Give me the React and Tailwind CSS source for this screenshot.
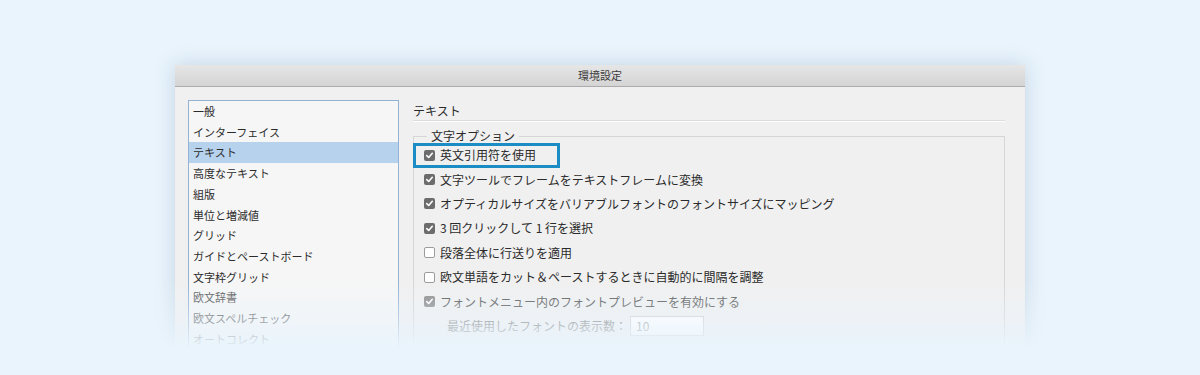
const listItems = [
  '一般',
  'インターフェイス',
  'テキスト',
  '高度なテキスト',
  '組版',
  '単位と増減値',
  'グリッド',
  'ガイドとペーストボード',
  '文字枠グリッド',
  '欧文辞書',
  '欧文スペルチェック',
  'オートコレクト',
]

const options = [
  { label: '英文引用符を使用', checked: true, highlight: true },
  { label: '文字ツールでフレームをテキストフレームに変換', checked: true },
  { label: 'オプティカルサイズをバリアブルフォントのフォントサイズにマッピング', checked: true },
  { label: '3 回クリックして 1 行を選択', checked: true },
  { label: '段落全体に行送りを適用', checked: false },
  { label: '欧文単語をカット＆ペーストするときに自動的に間隔を調整', checked: false },
  { label: 'フォントメニュー内のフォントプレビューを有効にする', checked: true, dim: true },
]

function Checkbox({ checked, dim }) {
  if (!checked) {
    return <span className="w-[11px] h-[11px] shrink-0 rounded-[2px] border border-[#9c9c9c] bg-white" />
  }
  return (
    <span className={`w-[11px] h-[11px] shrink-0 rounded-[2px] flex items-center justify-center ${dim ? 'bg-[#8a8a8a]' : 'bg-[#6c6c6c]'}`}>
      <svg width="9" height="9" viewBox="0 0 9 9">
        <path d="M1.8 4.6l1.9 1.9 3.6-4.2" fill="none" stroke="#fff" strokeWidth="1.6" strokeLinecap="round" strokeLinejoin="round" />
      </svg>
    </span>
  )
}

export default function App() {
  return (
    <div
      className="relative w-[1200px] h-[375px] overflow-hidden bg-[#e9f4fc] text-[#2b2b2b]"
      style={{ fontFamily: '"Noto Sans CJK JP", "Noto Sans", sans-serif' }}
    >
      <div className="pt-[65px] flex justify-center">
        <div className="w-[850px] h-[340px] bg-[#f0f0f0] shadow-[0_0_18px_rgba(110,140,170,0.3)]">
          {/* title bar */}
          <div className="h-[22px] border-b border-[#acacac] bg-gradient-to-b from-[#e6e6e6] to-[#d4d4d4] flex items-center justify-center text-[11px] text-[#3c3c3c]">
            環境設定
          </div>

          <div className="flex pl-[13px] pr-[20px] pt-[14px]">
            {/* category list */}
            <div className="w-[211px] h-[260px] -mt-[1px] border border-[#93b2d4] bg-[#f6f6f6]">
              {listItems.map((item, i) => (
                <div
                  key={item}
                  className={`h-[20.7px] flex items-center pl-[4px] text-[11px] ${i === 2 ? 'bg-[#b7d2ed]' : ''} ${i >= 9 ? 'text-[#555]' : ''}`}
                >
                  {item}
                </div>
              ))}
            </div>

            {/* right pane */}
            <div className="flex-1 ml-[14px]">
              <div className="h-[20px] flex items-center text-[12px] border-b border-[#dcdcdc]">テキスト</div>
              <div className="h-px bg-white" />

              <div className="relative mt-[14px] border border-[#d6d6d6] pt-[6px] pl-[10px] h-[240px]">
                <span className="absolute -top-[10px] left-[13px] px-[4px] bg-[#f0f0f0] text-[12px] leading-[18px]">
                  文字オプション
                </span>

                {options.map((opt) => (
                  <div
                    key={opt.label}
                    className={`relative h-[24.4px] flex items-center gap-[5px] text-[12px] ${opt.dim ? 'text-[#555]' : ''}`}
                  >
                    <Checkbox checked={opt.checked} dim={opt.dim} />
                    <span>{opt.label}</span>
                    {opt.highlight && (
                      <div className="absolute left-[-11px] top-[-0.5px] w-[147px] h-[25px] border-[3px] border-[#1b8dc4]" />
                    )}
                  </div>
                ))}

                <div className="h-[24.4px] flex items-center pl-[23px] text-[12px] text-[#777]">
                  <span>最近使用したフォントの表示数：</span>
                  <span className="ml-[3px] w-[74px] h-[20px] border border-[#cfcfcf] bg-white flex items-center pl-[5px] text-[#999]">
                    10
                  </span>
                </div>
              </div>
            </div>
          </div>
        </div>
      </div>

      {/* fade into background */}
      <div className="pointer-events-none absolute inset-0 bg-[linear-gradient(to_bottom,rgba(233,244,252,0)_282px,rgba(233,244,252,0.45)_318px,#e9f4fc_348px)]" />
    </div>
  )
}
